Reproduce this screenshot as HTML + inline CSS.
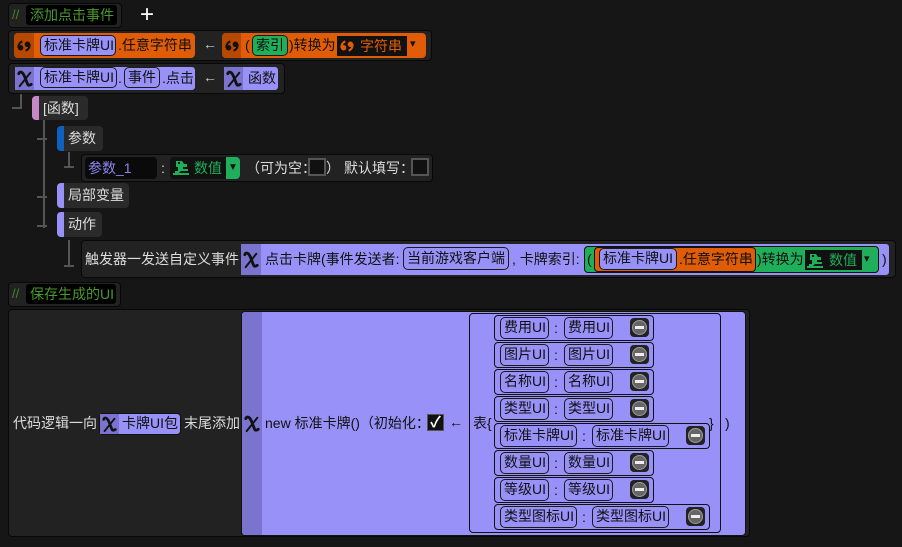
<!DOCTYPE html>
<html><head><meta charset="utf-8"><style>
*{margin:0;padding:0;box-sizing:border-box}
body{width:902px;height:547px;background:#161616;position:relative;overflow:hidden;font-family:"Liberation Sans","Noto Sans CJK SC",sans-serif;font-size:14px;color:#ddd}
.a{position:absolute}
.panel{position:absolute;background:#222;border:1px solid #080808;border-radius:4px}
.lav{position:absolute;background:#9892f8;border:1px solid #222;border-radius:4px}
.org{position:absolute;background:#e05c06;border-radius:4px}
.grn{position:absolute;background:#1fae5a;border-radius:4px}
.pill{position:absolute;border:1.5px solid #1a1a1a;border-radius:5px;color:#111;line-height:18px;padding:0 3px;white-space:nowrap;background:#9892f8}
.t{position:absolute;white-space:nowrap;line-height:20px}
.dk{color:#111}
.xi{position:absolute;background:#7a74cf;display:flex;align-items:center;justify-content:center}
.qi{position:absolute;background:#b84800;display:flex;align-items:center;justify-content:center}
.lbl{position:absolute;background:#2a2a2a;border-radius:4px;color:#ddd;line-height:25px;padding-left:11px}
.bar{position:absolute;left:0;top:0;bottom:0;width:7px;border-radius:4px 0 0 4px}
.ln{position:absolute;background:#555}
.row{position:absolute;border:1.5px solid #111;border-radius:4px}
.minus{position:absolute;width:19px;height:19px;background:#222;border-radius:4px}
.minus:after{content:"";position:absolute;left:2px;top:2px;width:15px;height:15px;border-radius:50%;background:#666;box-shadow:inset 0 0 0 1px #999}
.minus:before{content:"";position:absolute;left:5px;top:8px;width:9px;height:3px;background:#eee;z-index:2}
.cb{position:absolute;width:18px;height:18px;border:2px solid #555;background:#111}
</style></head><body>
<svg width="0" height="0" style="position:absolute"><defs>
<symbol id="X" viewBox="0 0 18 20"><path d="M2 4Q3 1 6 3Q8 5 10 11L12 16Q13 18 16 16" stroke="#111" stroke-width="3.2" fill="none" stroke-linecap="round"/><path d="M15 3L3 18" stroke="#111" stroke-width="2.2" stroke-linecap="round"/></symbol>
<symbol id="Q" viewBox="0 0 16 14"><circle cx="4" cy="9" r="3.2" fill="#111"/><path d="M1.5 9Q1 4 6 1.5" stroke="#111" stroke-width="2.4" fill="none"/><circle cx="12" cy="5" r="3.2" fill="#111"/><path d="M14.5 5Q15 10 10 12.5" stroke="#111" stroke-width="2.4" fill="none"/></symbol>
<symbol id="QO" viewBox="0 0 16 14"><circle cx="4" cy="9" r="3.2" fill="#e05c06"/><path d="M1.5 9Q1 4 6 1.5" stroke="#e05c06" stroke-width="2.4" fill="none"/><circle cx="12" cy="5" r="3.2" fill="#e05c06"/><path d="M14.5 5Q15 10 10 12.5" stroke="#e05c06" stroke-width="2.4" fill="none"/></symbol>
<symbol id="F" viewBox="0 0 18 18"><path d="M4 3h6l2 3h3v3h-4v2h5v2H9l-2 2H3v-2h3V9H4z" fill="#1fae5a"/><rect x="1" y="15" width="16" height="2" fill="#1fae5a"/><rect x="6" y="4" width="2" height="2" fill="#111"/></symbol>
</defs></svg>

<!-- comment 1 -->
<div class="panel" style="left:8px;top:3px;width:114px;height:25px"></div>
<div class="t" style="left:12px;top:5px;color:#3e8a22;font-size:13px">//</div>
<div class="a" style="left:26px;top:5px;width:91px;height:20px;background:#000;border-radius:3px"></div>
<div class="t" style="left:30px;top:5px;color:#4a9a2a">添加点击事件</div>
<div class="t" style="left:140px;top:2px;color:#fff;font-size:24px;line-height:26px">+</div>

<!-- row 2 -->
<div class="panel" style="left:8px;top:30px;width:424px;height:31px"></div>
<div class="org" style="left:14px;top:33px;width:181px;height:25px"></div>
<div class="qi" style="left:14px;top:33px;width:20px;height:25px;border-radius:4px 0 0 4px"><svg width="14" height="12"><use href="#Q"/></svg></div>
<div class="pill" style="left:40px;top:35px;width:76px;height:21px">标准卡牌UI</div>
<div class="t dk" style="left:118px;top:35px">.任意字符串</div>
<div class="t" style="left:203px;top:34px;color:#ccc">←</div>
<div class="org" style="left:222px;top:33px;width:204px;height:25px"></div>
<div class="qi" style="left:222px;top:33px;width:19px;height:25px;border-radius:4px 0 0 4px"><svg width="14" height="12"><use href="#Q"/></svg></div>
<div class="t dk" style="left:245px;top:35px">(</div>
<div class="pill" style="left:252px;top:35px;width:36px;height:21px;background:#1fae5a">索引</div>
<div class="t dk" style="left:289px;top:35px">)转换为</div>
<div class="a" style="left:337px;top:36px;width:70px;height:20px;background:#111"></div>
<svg class="a" style="left:340px;top:40px" width="14" height="12"><use href="#QO"/></svg>
<div class="t" style="left:360px;top:36px;color:#e05c06">字符串</div>
<div class="t" style="left:410px;top:34px;color:#111;font-size:11px">▾</div>

<!-- row 3 -->
<div class="panel" style="left:8px;top:63px;width:277px;height:31px"></div>
<div class="lav" style="left:14px;top:66px;width:182px;height:25px"></div>
<div class="xi" style="left:15px;top:67px;width:19px;height:23px"><svg width="16" height="18"><use href="#X"/></svg></div>
<div class="pill" style="left:40px;top:67px;width:77px;height:21px">标准卡牌UI</div>
<div class="t dk" style="left:118px;top:68px">.</div>
<div class="pill" style="left:124px;top:67px;width:36px;height:21px">事件</div>
<div class="t dk" style="left:162px;top:68px">.点击</div>
<div class="t" style="left:203px;top:67px;color:#ccc">←</div>
<div class="lav" style="left:223px;top:66px;width:56px;height:25px"></div>
<div class="xi" style="left:224px;top:67px;width:19px;height:23px"><svg width="16" height="18"><use href="#X"/></svg></div>
<div class="t dk" style="left:248px;top:68px">函数</div>

<!-- tree -->
<div class="ln" style="left:20px;top:94px;width:2px;height:14px"></div>
<div class="ln" style="left:12px;top:107px;width:10px;height:2px"></div>
<div class="lbl" style="left:32px;top:96px;width:56px;height:24px">[函数]<div class="bar" style="background:#c888c8"></div></div>
<div class="ln" style="left:43px;top:120px;width:2px;height:108px"></div>
<div class="ln" style="left:37px;top:138px;width:10px;height:2px"></div>
<div class="ln" style="left:37px;top:196px;width:10px;height:2px"></div>
<div class="ln" style="left:37px;top:225px;width:10px;height:2px"></div>
<div class="lbl" style="left:57px;top:126px;width:46px;height:25px">参数<div class="bar" style="background:#1060c0"></div></div>
<div class="ln" style="left:68px;top:152px;width:2px;height:14px"></div>
<div class="ln" style="left:64px;top:166px;width:10px;height:2px"></div>

<div class="panel" style="left:81px;top:154px;width:352px;height:28px"></div>
<div class="a" style="left:85px;top:157px;width:72px;height:22px;background:#0a0a0a;border-radius:4px"></div>
<div class="t" style="left:88px;top:158px;color:#8c86f0">参数_1</div>
<div class="t" style="left:161px;top:158px">:</div>
<div class="a" style="left:170px;top:157px;width:70px;height:22px;background:#111;border-radius:4px"></div>
<svg class="a" style="left:172px;top:158px" width="18" height="18"><use href="#F"/></svg>
<div class="t" style="left:194px;top:158px;color:#1fae5a">数值</div>
<div class="a" style="left:226px;top:157px;width:14px;height:22px;background:#1fae5a;border-radius:0 4px 4px 0;color:#111;font-size:10px;text-align:center;line-height:22px">▼</div>
<div class="t" style="left:246px;top:158px">（可为空：</div>
<div class="cb" style="left:308px;top:158px"></div>
<div class="t" style="left:326px;top:158px">）</div>
<div class="t" style="left:344px;top:158px">默认填写：</div>
<div class="cb" style="left:411px;top:158px"></div>

<div class="lbl" style="left:57px;top:183px;width:72px;height:25px">局部变量<div class="bar" style="background:#9892f8"></div></div>
<div class="lbl" style="left:57px;top:212px;width:45px;height:25px">动作<div class="bar" style="background:#9892f8"></div></div>
<div class="ln" style="left:68px;top:240px;width:2px;height:26px"></div>
<div class="ln" style="left:64px;top:265px;width:10px;height:2px"></div>

<!-- action row -->
<div class="panel" style="left:81px;top:240px;width:815px;height:38px"></div>
<div class="t" style="left:85px;top:249px">触发器一发送自定义事件</div>
<div class="lav" style="left:240px;top:243px;width:650px;height:33px"></div>
<div class="xi" style="left:241px;top:244px;width:20px;height:31px"><svg width="16" height="18"><use href="#X"/></svg></div>
<div class="t dk" style="left:265px;top:249px">点击卡牌(事件发送者:</div>
<div class="pill" style="left:403px;top:247px;width:106px;height:23px;line-height:20px">当前游戏客户端</div>
<div class="t dk" style="left:512px;top:249px">, 卡牌索引:</div>
<div class="grn" style="left:584px;top:246px;width:295px;height:27px;border:1px solid #111"></div>
<div class="t dk" style="left:587px;top:249px">(</div>
<div class="org" style="left:594px;top:247px;width:162px;height:25px;border:1px solid #111"></div>
<div class="pill" style="left:599px;top:248px;width:78px;height:22px">标准卡牌UI</div>
<div class="t dk" style="left:679px;top:249px">.任意字符串</div>
<div class="t dk" style="left:757px;top:249px">)转换为</div>
<div class="a" style="left:805px;top:250px;width:57px;height:20px;background:#111"></div>
<svg class="a" style="left:806px;top:251px" width="18" height="18"><use href="#F"/></svg>
<div class="t" style="left:829px;top:250px;color:#1fae5a">数值</div>
<div class="t" style="left:864px;top:249px;color:#111;font-size:11px">▾</div>
<div class="t dk" style="left:882px;top:249px">)</div>

<!-- comment 2 -->
<div class="panel" style="left:8px;top:282px;width:113px;height:25px"></div>
<div class="t" style="left:12px;top:284px;color:#3e8a22;font-size:13px">//</div>
<div class="a" style="left:26px;top:284px;width:90px;height:20px;background:#000;border-radius:3px"></div>
<div class="t" style="left:30px;top:284px;color:#4a9a2a">保存生成的UI</div>

<!-- big panel -->
<div class="panel" style="left:8px;top:309px;width:742px;height:228px"></div>
<div class="t" style="left:13px;top:413px">代码逻辑一向</div>
<div class="lav" style="left:99px;top:413px;width:82px;height:22px;border-color:#111"></div>
<div class="xi" style="left:100px;top:414px;width:19px;height:20px"><svg width="15" height="17"><use href="#X"/></svg></div>
<div class="t dk" style="left:122px;top:413px">卡牌UI包</div>
<div class="t" style="left:184px;top:413px">末尾添加</div>
<div class="lav" style="left:241px;top:311px;width:505px;height:225px;border-color:#111"></div>
<div class="xi" style="left:242px;top:312px;width:20px;height:223px;border-radius:4px 0 0 4px"><svg width="16" height="18"><use href="#X"/></svg></div>
<div class="t dk" style="left:265px;top:413px">new 标准卡牌()（初始化：</div>
<div class="a" style="left:427px;top:414px;width:17px;height:17px;background:#111;border:1px solid #555;color:#fff;font-size:15px;line-height:15px;text-align:center;font-weight:bold">✓</div>
<div class="t dk" style="left:449px;top:412px">←</div>
<div class="t dk" style="left:473px;top:413px">表{</div>
<div class="row" style="left:469px;top:313px;width:252px;height:220px;border-width:1px"></div>
<div class="t dk" style="left:709px;top:413px">}</div>
<div class="t dk" style="left:725px;top:413px">)</div>

<div class="row" style="left:494px;top:315px;width:160px;height:26px"></div>
<div class="pill" style="left:500px;top:317px;width:49px;height:22px">费用UI</div><div class="t dk" style="left:554px;top:318px">:</div>
<div class="pill" style="left:564px;top:317px;width:49px;height:22px">费用UI</div><div class="minus" style="left:630px;top:318px"></div>

<div class="row" style="left:494px;top:342px;width:160px;height:26px"></div>
<div class="pill" style="left:500px;top:344px;width:49px;height:22px">图片UI</div><div class="t dk" style="left:554px;top:345px">:</div>
<div class="pill" style="left:564px;top:344px;width:49px;height:22px">图片UI</div><div class="minus" style="left:630px;top:345px"></div>

<div class="row" style="left:494px;top:369px;width:160px;height:26px"></div>
<div class="pill" style="left:500px;top:371px;width:49px;height:22px">名称UI</div><div class="t dk" style="left:554px;top:372px">:</div>
<div class="pill" style="left:564px;top:371px;width:49px;height:22px">名称UI</div><div class="minus" style="left:630px;top:372px"></div>

<div class="row" style="left:494px;top:396px;width:160px;height:26px"></div>
<div class="pill" style="left:500px;top:398px;width:49px;height:22px">类型UI</div><div class="t dk" style="left:554px;top:399px">:</div>
<div class="pill" style="left:564px;top:398px;width:49px;height:22px">类型UI</div><div class="minus" style="left:630px;top:399px"></div>

<div class="row" style="left:494px;top:423px;width:216px;height:26px"></div>
<div class="pill" style="left:500px;top:425px;width:77px;height:22px">标准卡牌UI</div><div class="t dk" style="left:582px;top:426px">:</div>
<div class="pill" style="left:592px;top:425px;width:77px;height:22px">标准卡牌UI</div><div class="minus" style="left:686px;top:426px"></div>

<div class="row" style="left:494px;top:450px;width:160px;height:26px"></div>
<div class="pill" style="left:500px;top:452px;width:49px;height:22px">数量UI</div><div class="t dk" style="left:554px;top:453px">:</div>
<div class="pill" style="left:564px;top:452px;width:49px;height:22px">数量UI</div><div class="minus" style="left:630px;top:453px"></div>

<div class="row" style="left:494px;top:477px;width:160px;height:26px"></div>
<div class="pill" style="left:500px;top:479px;width:49px;height:22px">等级UI</div><div class="t dk" style="left:554px;top:480px">:</div>
<div class="pill" style="left:564px;top:479px;width:49px;height:22px">等级UI</div><div class="minus" style="left:630px;top:480px"></div>

<div class="row" style="left:494px;top:504px;width:216px;height:26px"></div>
<div class="pill" style="left:500px;top:506px;width:77px;height:22px">类型图标UI</div><div class="t dk" style="left:582px;top:507px">:</div>
<div class="pill" style="left:592px;top:506px;width:77px;height:22px">类型图标UI</div><div class="minus" style="left:686px;top:507px"></div>

</body></html>
